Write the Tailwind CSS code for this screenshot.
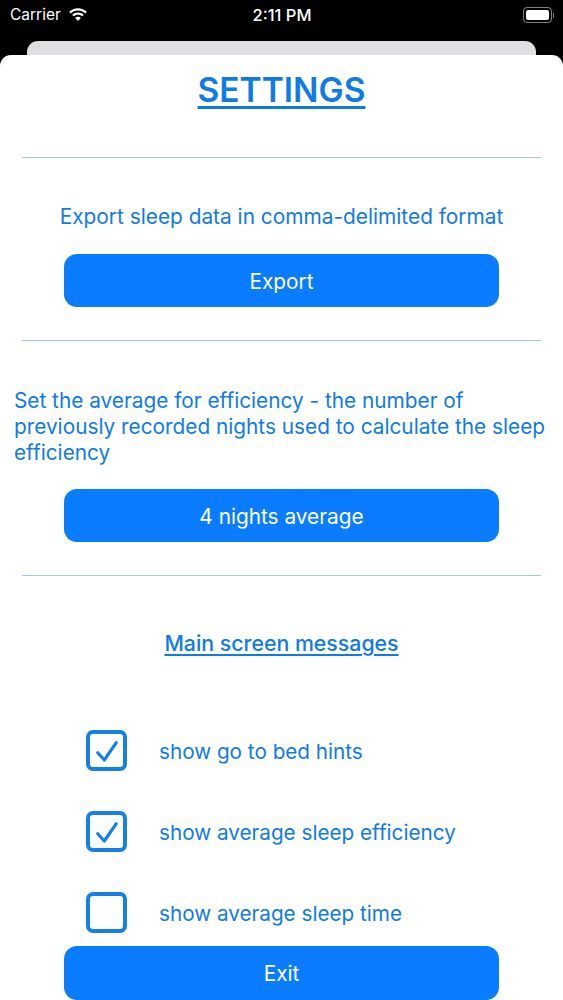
<!DOCTYPE html>
<html lang="en">
  <head>
    <meta charset="UTF-8" />
    <title>Settings</title>
    <script src="https://cdn.jsdelivr.net/npm/@tailwindcss/browser@4"></script>
  </head>
  <body class="bg-black font-['Inter','Roboto',sans-serif] overflow-hidden">
    <div class="w-[563px] h-[1000px] flex flex-col overflow-hidden">
      <!-- Status bar -->
      <header class="h-[41px] shrink-0 flex items-start justify-between pl-[10px] pr-[9px] pt-[5px] text-white">
        <div class="flex items-center gap-[7px] w-[160px]">
          <span class="text-[15.5px] leading-[20px]">Carrier</span>
          <svg width="20" height="15" viewBox="0 0 19 14" fill="#fff">
            <path d="M9.5 2.2c2.7 0 5.1 1 7 2.8l1.400-1.500C15.700 1.300 12.700 0 9.500 0S3.300 1.300 1.100 3.500L2.500 5c1.900-1.800 4.300-2.800 7-2.800z" />
            <path d="M9.500 6.200c1.600 0 3 .6 4.100 1.600l1.400-1.500C13.500 4.900 11.600 4.100 9.500 4.100s-4 .8-5.500 2.200l1.400 1.500c1.100-1 2.500-1.600 4.100-1.600z" />
            <path d="M9.500 8.200c-1.100 0-2 .4-2.700 1.100l2.700 2.900 2.700-2.900c-.7-.7-1.600-1.100-2.700-1.100z" />
          </svg>
        </div>
        <span class="text-[16.5px] leading-[20px] font-medium">2:11 PM</span>
        <div class="w-[160px] flex justify-end pt-[2px]">
          <div class="flex items-center gap-[1px]">
            <div class="w-[29px] h-[16px] rounded-[4px] border border-white/50 p-[2px]">
              <div class="w-full h-full rounded-[2px] bg-white"></div>
            </div>
            <div class="w-[1px] h-[5px] bg-white/50"></div>
          </div>
        </div>
      </header>

      <!-- Sheet behind -->
      <div class="h-[14px] shrink-0 mx-[27px] w-[509px] bg-[#dfdee1] rounded-t-[11px]"></div>

      <!-- Settings sheet -->
      <main class="flex-1 bg-white rounded-t-[11px] text-[#0f7be6] flex flex-col">
        <h1 class="mt-[14px] h-[43px] text-center text-[33.5px] leading-[43px] font-semibold underline decoration-[3px] underline-offset-[4px]">SETTINGS</h1>

        <hr class="mt-[45px] mx-[22px] border-[#9cc8f2]" />
        <p class="mt-[46px] h-[26px] text-center text-[20.85px] leading-[26px]">Export sleep data in comma-delimited format</p>
        <button class="mt-[24px] mx-[64px] h-[53px] shrink-0 rounded-[13px] bg-[#0a7cff] pt-[2px] text-white text-[20.8px]">Export</button>

        <hr class="mt-[33px] mx-[22px] border-[#9cc8f2]" />
        <p class="mt-[47px] ml-[14px] mr-[10px] h-[77px] text-[20.8px] leading-[26px]">Set the average for efficiency - the number of previously recorded nights used to calculate the sleep efficiency</p>
        <button class="mt-[24px] mx-[64px] h-[53px] shrink-0 rounded-[13px] bg-[#0a7cff] pt-[2px] text-white text-[20.8px]">4 nights average</button>

        <hr class="mt-[33px] mx-[22px] border-[#9cc8f2]" />
        <h2 class="mt-[53px] h-[28px] text-center text-[21.3px] leading-[28px] font-medium underline underline-offset-[3px]">Main screen messages</h2>

        <ul class="mt-[73px] ml-[86px] flex flex-col gap-[40px]">
          <li class="flex items-center gap-[32px] h-[41px]">
            <span class="w-[41px] h-[41px] rounded-[7px] border-[4px] border-[#1580e8] flex items-center justify-center">
              <svg width="24" height="24" viewBox="0 0 24 24" fill="none" stroke="#1580e8" stroke-width="3.2" stroke-linecap="round" stroke-linejoin="round"><path d="M2.700 13.700L9.300 21L21.300 3.700" /></svg>
            </span>
            <span class="pt-[2px] text-[20.7px]">show go to bed hints</span>
          </li>
          <li class="flex items-center gap-[32px] h-[41px]">
            <span class="w-[41px] h-[41px] rounded-[7px] border-[4px] border-[#1580e8] flex items-center justify-center">
              <svg width="24" height="24" viewBox="0 0 24 24" fill="none" stroke="#1580e8" stroke-width="3.2" stroke-linecap="round" stroke-linejoin="round"><path d="M2.700 13.700L9.300 21L21.300 3.700" /></svg>
            </span>
            <span class="pt-[2px] text-[20.7px]">show average sleep efficiency</span>
          </li>
          <li class="flex items-center gap-[32px] h-[41px]">
            <span class="w-[41px] h-[41px] rounded-[7px] border-[4px] border-[#1580e8]"></span>
            <span class="pt-[2px] text-[20.7px]">show average sleep time</span>
          </li>
        </ul>

        <button class="mt-[13px] mx-[64px] h-[54px] shrink-0 rounded-[13px] bg-[#0a7cff] pt-[1px] text-white text-[20.8px]">Exit</button>
      </main>
    </div>
  </body>
</html>
